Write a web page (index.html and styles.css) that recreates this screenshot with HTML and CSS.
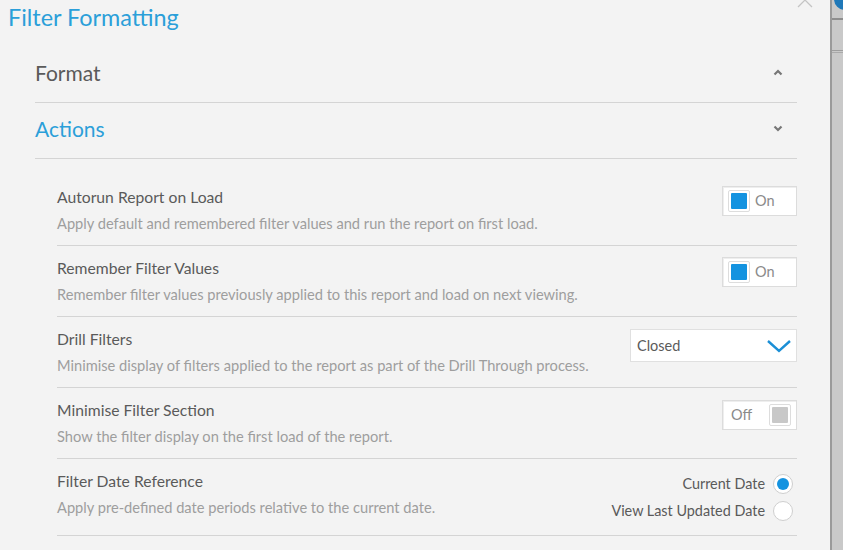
FILE: index.html
```html
<!DOCTYPE html>
<html>
<head>
<meta charset="utf-8">
<link rel="stylesheet" href="styles.css">
</head>
<body>
<div class="app">
  <div class="panel">
    <div class="header">
      <h1 class="title">Filter Formatting</h1>
      <svg class="close" width="16" height="16" viewBox="0 0 16 16"><path d="M1 1 L15 15 M15 1 L1 15" stroke="#c4c4c4" stroke-width="1.3" fill="none"/></svg>
    </div>
    <div class="sections">
      <div class="section-head">
        <span class="section-title">Format</span>
        <svg class="chev" width="10" height="7" viewBox="0 0 10 7"><path d="M1.5 5.5 L5 2 L8.5 5.5" stroke="#777" stroke-width="2.2" fill="none"/></svg>
      </div>
      <div class="section-head">
        <span class="section-title active">Actions</span>
        <svg class="chev" width="10" height="7" viewBox="0 0 10 7"><path d="M1.5 1.5 L5 5 L8.5 1.5" stroke="#777" stroke-width="2.2" fill="none"/></svg>
      </div>
      <div class="rows">
        <div class="row">
          <div class="text">
            <div class="label">Autorun Report on Load</div>
            <div class="desc">Apply default and remembered filter values and run the report on first load.</div>
          </div>
          <div class="toggle"><span class="knob on"></span><span class="tlabel">On</span></div>
        </div>
        <div class="row">
          <div class="text">
            <div class="label">Remember Filter Values</div>
            <div class="desc">Remember filter values previously applied to this report and load on next viewing.</div>
          </div>
          <div class="toggle"><span class="knob on"></span><span class="tlabel">On</span></div>
        </div>
        <div class="row">
          <div class="text">
            <div class="label">Drill Filters</div>
            <div class="desc">Minimise display of filters applied to the report as part of the Drill Through process.</div>
          </div>
          <div class="select">
            <span class="sel-text">Closed</span>
            <svg class="sel-chev" width="26" height="14" viewBox="0 0 26 14"><path d="M2 2 L13 12 L24 2" stroke="#1b8fd6" stroke-width="2.4" fill="none"/></svg>
          </div>
        </div>
        <div class="row">
          <div class="text">
            <div class="label">Minimise Filter Section</div>
            <div class="desc">Show the filter display on the first load of the report.</div>
          </div>
          <div class="toggle off"><span class="tlabel">Off</span><span class="knob"></span></div>
        </div>
        <div class="row last">
          <div class="text">
            <div class="label">Filter Date Reference</div>
            <div class="desc">Apply pre-defined date periods relative to the current date.</div>
          </div>
          <div class="radios">
            <div class="radio-row"><span>Current Date</span><span class="radio checked"></span></div>
            <div class="radio-row"><span>View Last Updated Date</span><span class="radio"></span></div>
          </div>
        </div>
      </div>
    </div>
  </div>
  <div class="side">
    <span class="side-badge"></span>
    <span class="side-line l1"></span>
    <span class="side-line l2"></span>
  </div>
</div>
</body>
</html>
```
FILE: styles.css
```css
* { box-sizing: border-box; }
html, body { margin: 0; padding: 0; }
body {
  width: 843px; height: 550px; overflow: hidden;
  font-family: "Lato", "Open Sans", sans-serif;
  background: #f3f3f3;
}
.app { display: flex; height: 550px; }
.panel { width: 830px; background: #f3f3f3; position: relative; }
.side {
  width: 13px; background: #c9c9c9; border-left: 2px solid #9a9a9a;
  position: relative; overflow: hidden;
}
.side-badge {
  position: absolute; left: 2px; top: -12px; width: 22px; height: 22px;
  border-radius: 50%; background: #1f78b8;
}
.side-line { position: absolute; left: 0; right: 0; height: 2px; background: #8e8e8e; }
.side-line.l1 { top: 18px; }
.side-line.l2 { top: 50px; height: 1px; background: #9e9e9e; box-shadow: 0 2px 0 #aaa; }
.header { height: 47px; position: relative; }
.title {
  margin: 0; padding: 3px 0 0 8px;
  font-size: 23.4px; font-weight: 400; color: #2b9fd9; letter-spacing: 0;
}
.close { position: absolute; left: 797px; top: -8px; }
.sections { padding: 0 33px 0 35px; }
.section-head {
  height: 56px; border-bottom: 1px solid #d4d4d4;
  display: flex; align-items: center; justify-content: space-between;
  padding-right: 14px; padding-bottom: 4px;
}
.section-title { font-size: 21px; color: #5a5a5a; }
.section-title.active { color: #2b9fd9; }
.rows { padding-left: 22px; padding-top: 16px; }
.row {
  height: 71px; border-bottom: 1px solid #d4d4d4;
  display: flex; align-items: center; justify-content: space-between;
}
.row.last { height: 77px; }
.text { padding-top: 1px; }
.row.last .text { margin-top: -7px; }
.label { font-size: 15.7px; color: #5a5a5a; line-height: 20px; }
.desc { font-size: 14.65px; color: #9e9e9e; line-height: 20px; margin-top: 7px; }
.toggle {
  width: 75px; height: 30px; background: #fff; border: 1px solid #dcdcdc;
  display: flex; align-items: center; padding: 0 5px; gap: 5px;
  margin-top: -19px; box-shadow: inset 1px 1px 0 #eee;
}
.toggle.off { justify-content: space-between; padding-left: 8px; margin-top: -17px; }
.knob {
  width: 22px; height: 22px; border: 1px solid #ddd; border-radius: 2px;
  background: #fff; display: flex; align-items: center; justify-content: center;
  position: relative;
}
.knob::after {
  content: ""; width: 16px; height: 16px; background: #c8c8c8; border-radius: 1px;
}
.knob.on::after { background: #1493e0; }
.tlabel { font-size: 14.5px; color: #8a8a8a; }
.select {
  width: 167px; height: 33px; background: #fff; border: 1px solid #e0e0e0;
  display: flex; align-items: center; justify-content: space-between;
  padding: 0 4px 0 6px; margin-top: -14px;
}
.sel-text { font-size: 14.5px; color: #5a5a5a; }
.sel-chev { margin-top: 2px; }
.radios {
  display: flex; flex-direction: column; align-items: flex-end; gap: 7px;
  margin-top: 0; padding-right: 4px;
}
.radio-row { display: flex; align-items: center; gap: 8px; font-size: 14.4px; color: #5a5a5a; }
.radio {
  width: 20px; height: 20px; border-radius: 50%; background: #fff;
  border: 1px solid #cfcfcf; display: flex; align-items: center; justify-content: center;
}
.radio.checked::after {
  content: ""; width: 12px; height: 12px; border-radius: 50%; background: #1493e0;
}
```
